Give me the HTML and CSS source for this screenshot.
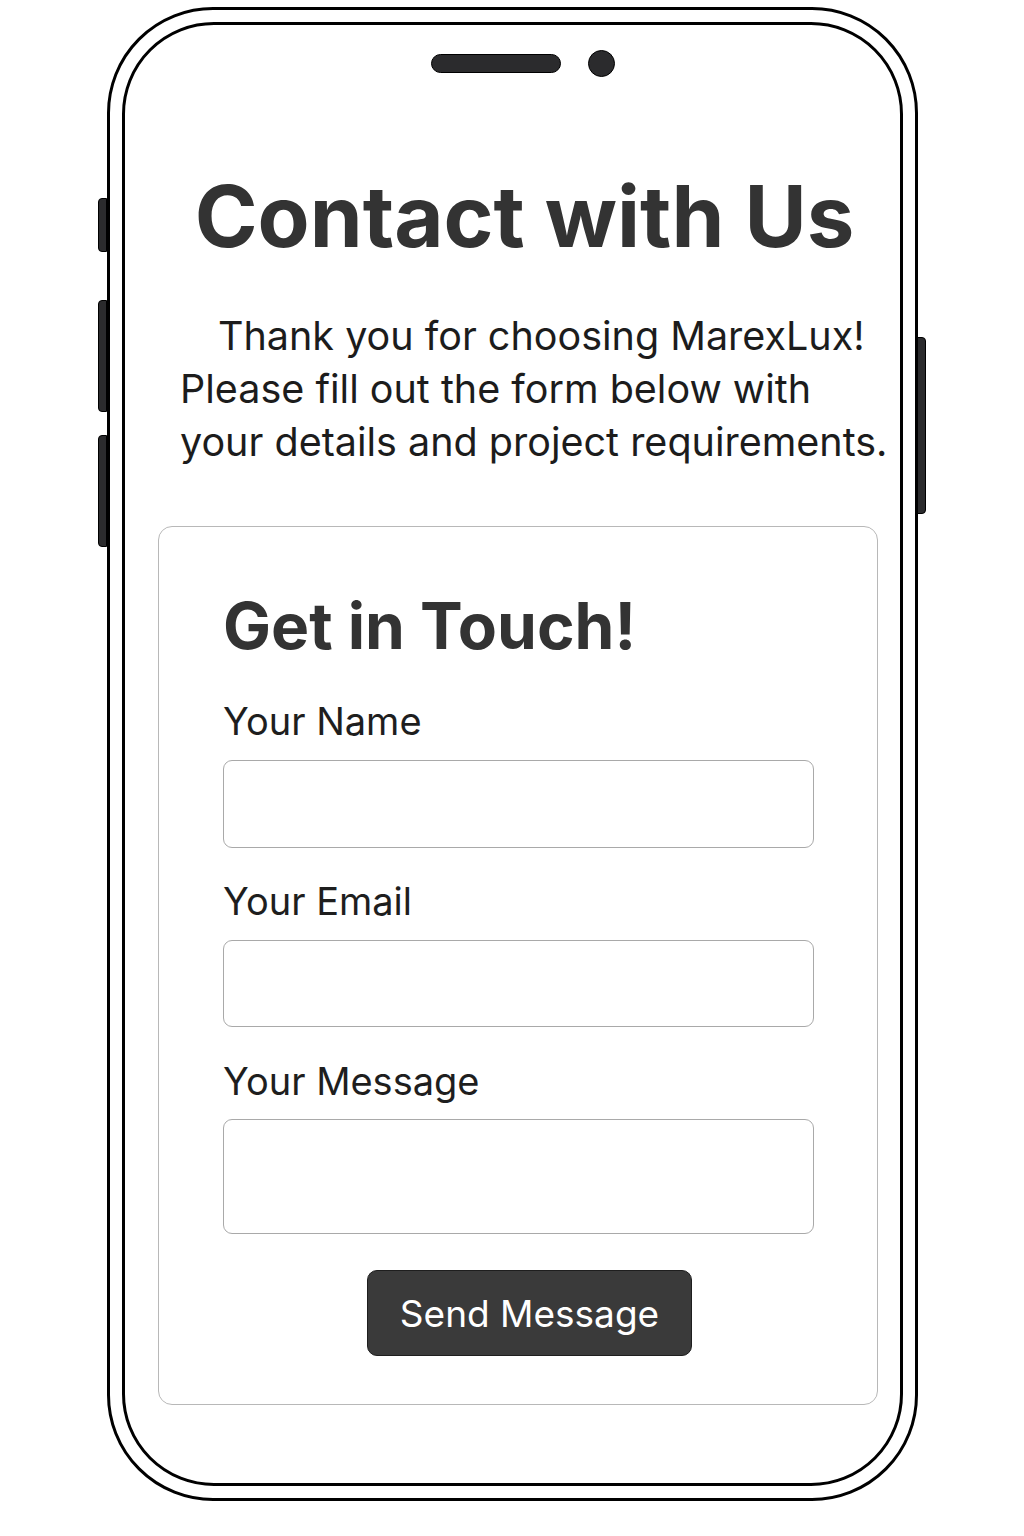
FILE: index.html
```html
<!DOCTYPE html>
<html lang="en">
<head>
<meta charset="utf-8">
<title>Contact with Us</title>
<link rel="stylesheet" href="styles.css">
</head>
<body>
<div class="phone">
  <span class="side-btn side-l1"></span>
  <span class="side-btn side-l2"></span>
  <span class="side-btn side-l3"></span>
  <span class="side-btn side-r1"></span>
  <div class="screen">
    <div class="notch"><span class="speaker"></span><span class="camera"></span></div>
    <main class="content">
      <h1 class="title">Contact with Us</h1>
      <p class="intro">Thank you for choosing MarexLux!<br>Please fill out the form below with<br>your details and project requirements.</p>
      <form class="card">
        <h2 class="card-title">Get in Touch!</h2>
        <label class="field field-first"><span class="field-label">Your Name</span><input class="input input-name" type="text"></label>
        <label class="field field-email"><span class="field-label">Your Email</span><input class="input input-email" type="email"></label>
        <label class="field field-msg"><span class="field-label">Your Message</span><textarea class="input input-msg"></textarea></label>
        <button class="send" type="button">Send Message</button>
      </form>
    </main>
  </div>
</div>
</body>
</html>
```
FILE: styles.css
```css
html, body {
  margin: 0;
  padding: 0;
  background: #ffffff;
}
body {
  font-family: Inter, "Noto Sans", "Liberation Sans", sans-serif;
  color: #1e1e1e;
}
.phone {
  position: relative;
  box-sizing: border-box;
  margin: 7px 0 0 107px;
  width: 811px;
  height: 1494px;
  border: 3px solid #000;
  border-radius: 106px;
  padding: 12px;
  background: #fff;
}
.side-btn {
  position: absolute;
  width: 9px;
  background: #2b2b2d;
  border: 1px solid #000;
  box-sizing: border-box;
}
.side-l1 { left: -12px; top: 188px; height: 54px; border-radius: 4px 0 0 4px; }
.side-l2 { left: -12px; top: 290px; height: 112px; border-radius: 4px 0 0 4px; }
.side-l3 { left: -12px; top: 425px; height: 112px; border-radius: 4px 0 0 4px; }
.side-r1 { right: -11px; top: 327px; height: 177px; border-radius: 0 4px 4px 0; }
.screen {
  box-sizing: border-box;
  height: 100%;
  border: 3px solid #000;
  border-radius: 92px;
}
.notch {
  display: flex;
  align-items: center;
  justify-content: center;
  gap: 27px;
  padding: 25px 0 0 21px;
  height: 27px;
}
.speaker {
  display: block;
  width: 130px;
  height: 19px;
  border-radius: 10px;
  background: #2b2b2d;
  border: 1px solid #000;
  box-sizing: border-box;
}
.camera {
  display: block;
  width: 27px;
  height: 27px;
  border-radius: 50%;
  background: #2b2b2d;
  border: 1px solid #000;
  box-sizing: border-box;
}
.content {
  display: block;
  padding: 0 22px 0 33px;
}
.title {
  margin: 89px 0 0;
  padding-left: 13px;
  text-align: center;
  font-size: 85px;
  line-height: 101px;
  font-weight: 700;
  color: #333333;
  letter-spacing: 0;
}
.intro {
  margin: 43px 0 0;
  padding-left: 22px;
  text-indent: 38px;
  font-size: 39.5px;
  line-height: 53px;
  font-weight: 400;
  color: #1c1c1c;
  white-space: nowrap;
}
.card {
  display: flex;
  flex-direction: column;
  margin-top: 57px;
  border: 1px solid #b8b8b8;
  border-radius: 14px;
  padding: 61px 63px 48px 64px;
}
.card-title {
  margin: 0;
  font-size: 64px;
  line-height: 76px;
  font-weight: 700;
  color: #333333;
  letter-spacing: 0;
}
.field {
  display: flex;
  flex-direction: column;
}
.field-first { margin-top: 34px; }
.field-email { margin-top: 30px; }
.field-msg { margin-top: 31px; }
.field-label {
  font-size: 38px;
  line-height: 46px;
  color: #1e1e1e;
}
.input {
  display: block;
  box-sizing: border-box;
  width: 100%;
  margin: 16px 0 0;
  border: 1px solid #a9a9a9;
  border-radius: 9px;
  background: #fff;
  font: inherit;
  resize: none;
  outline: none;
}
.input-name { height: 88px; }
.input-email { height: 87px; }
.input-msg { height: 115px; margin-top: 15px; }
.send {
  align-self: center;
  margin: 36px 0 0 22px;
  width: 325px;
  height: 86px;
  box-sizing: border-box;
  border: 1px solid #1e1e1e;
  border-radius: 10px;
  background: #3a3a3a;
  color: #ffffff;
  font-family: Inter, "Noto Sans", "Liberation Sans", sans-serif;
  font-size: 37px;
  font-weight: 400;
  padding: 0;
}
```
